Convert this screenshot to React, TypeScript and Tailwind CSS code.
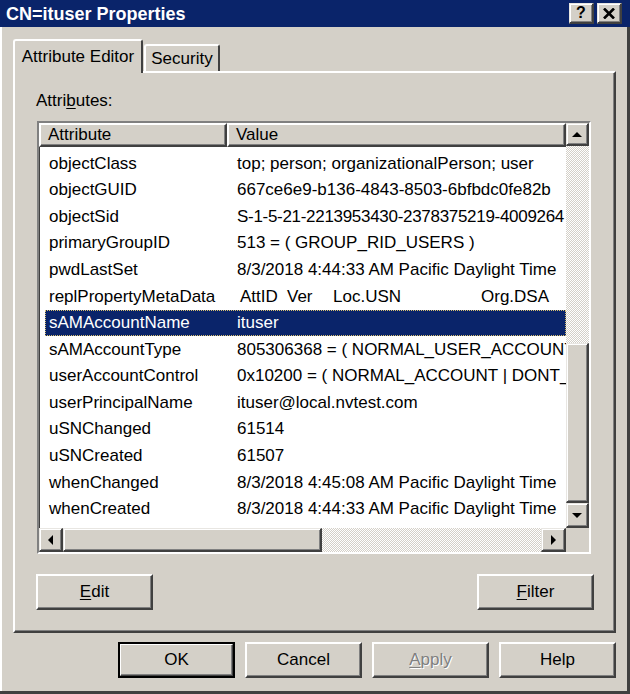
import React from 'react';

const raised =
  'bg-[#d4d0c8] border-t-2 border-l-2 border-t-white border-l-white border-r-2 border-b-2 border-r-[#404040] border-b-[#404040] shadow-[inset_-1px_-1px_0_#808080]';
const raisedThin =
  'bg-[#d4d0c8] border-t border-l border-t-[#e8e6e2] border-l-[#e8e6e2] border-r-2 border-b-2 border-r-[#404040] border-b-[#404040] shadow-[inset_1px_1px_0_#fff,inset_-1px_-1px_0_#808080]';
const dither =
  'bg-[image:repeating-conic-gradient(#d4d0c8_0%_25%,#ffffff_0%_50%)] bg-[length:2px_2px]';

const rows: { name: string; value: React.ReactNode; selected?: boolean }[] = [
  { name: 'objectClass', value: 'top; person; organizationalPerson; user' },
  { name: 'objectGUID', value: '667ce6e9-b136-4843-8503-6bfbdc0fe82b' },
  {
    name: 'objectSid',
    value: <span className="tracking-[-0.3px]">S-1-5-21-2213953430-2378375219-4009264</span>,
  },
  { name: 'primaryGroupID', value: '513 = ( GROUP_RID_USERS )' },
  { name: 'pwdLastSet', value: '8/3/2018 4:44:33 AM Pacific Daylight Time' },
  {
    name: 'replPropertyMetaData',
    value: (
      <span className="flex pl-[3px]">
        <span className="w-[47px]">AttID</span>
        <span className="w-[46px]">Ver</span>
        <span className="w-[148px]">Loc.USN</span>
        <span>Org.DSA</span>
      </span>
    ),
  },
  { name: 'sAMAccountName', value: 'ituser', selected: true },
  { name: 'sAMAccountType', value: '805306368 = ( NORMAL_USER_ACCOUNT )' },
  { name: 'userAccountControl', value: '0x10200 = ( NORMAL_ACCOUNT | DONT_EXPIRE_PASSWD )' },
  { name: 'userPrincipalName', value: 'ituser@local.nvtest.com' },
  { name: 'uSNChanged', value: '61514' },
  { name: 'uSNCreated', value: '61507' },
  { name: 'whenChanged', value: '8/3/2018 4:45:08 AM Pacific Daylight Time' },
  { name: 'whenCreated', value: '8/3/2018 4:44:33 AM Pacific Daylight Time' },
];

function Arrow({ dir }: { dir: 'up' | 'down' | 'left' | 'right' }) {
  const d = {
    up: 'M5 0 L10 5 L0 5 Z',
    down: 'M0 0 L10 0 L5 5 Z',
    left: 'M5 0 L5 10 L0 5 Z',
    right: 'M0 0 L5 5 L0 10 Z',
  }[dir];
  const vertical = dir === 'up' || dir === 'down';
  return (
    <svg width={vertical ? 10 : 5} height={vertical ? 5 : 10} viewBox={vertical ? '0 0 10 5' : '0 0 5 10'}>
      <path d={d} fill="#000" />
    </svg>
  );
}

function Button({ children, isDefault }: { children: React.ReactNode; isDefault?: boolean }) {
  if (isDefault) {
    return (
      <div className="w-[117px] h-[36px] border-2 border-black flex">
        <div className="flex-1 flex items-center justify-center bg-[#d4d0c8] border-t border-l border-white border-r border-b border-r-[#404040] border-b-[#404040] shadow-[inset_-1px_-1px_0_#808080]">
          {children}
        </div>
      </div>
    );
  }
  return <div className={`w-[117px] h-[36px] flex items-center justify-center ${raised}`}>{children}</div>;
}

export default function App() {
  return (
    <div className="w-[630px] h-[694px] bg-[#d4d0c8] flex flex-col overflow-hidden font-['Liberation_Sans',Arial,sans-serif] text-[17px] text-black shadow-[inset_-3px_-3px_0_#404040,inset_2px_0_0_#ffffff]">
      {/* Title bar */}
      <div className="h-[27px] bg-[#0a246a] flex items-center justify-between pl-[6px] pr-[8px] shrink-0">
        <span className="text-white font-bold text-[18px] leading-none">CN=ituser Properties</span>
        <div className="flex gap-[3px]">
          <div className={`w-[25px] h-[21px] flex items-center justify-center ${raisedThin}`}>
            <span className="font-bold text-[16px] leading-none">?</span>
          </div>
          <div className={`w-[25px] h-[21px] flex items-center justify-center ${raisedThin}`}>
            <svg width="12" height="11" viewBox="0 0 12 11">
              <path d="M1 0.5 L11 10.5 M11 0.5 L1 10.5" stroke="#000" strokeWidth="2.6" />
            </svg>
          </div>
        </div>
      </div>

      {/* Tabs */}
      <div className="ml-[13px] mt-[12px] flex items-end">
        <div className="relative z-10 -mb-[2px] w-[130px] h-[34px] bg-[#d4d0c8] border-t-2 border-l-2 border-white border-r-2 border-r-[#404040] rounded-t-[3px] flex items-center justify-center">
          Attribute Editor
        </div>
        <div className="ml-[1px] w-[76px] h-[27px] border-t-2 border-l-2 border-white border-r-2 border-r-[#404040] rounded-t-[3px] flex items-center justify-center">
          Security
        </div>
      </div>

      {/* Tab panel */}
      <div className="ml-[13px] w-[603px] h-[562px] shrink-0 flex flex-col border-t-2 border-l-2 border-white border-r-2 border-b-2 border-r-[#404040] border-b-[#404040] shadow-[inset_-1px_-1px_0_#808080]">
        <div className="pl-[21px] mt-[18px] leading-[20px]">
          Attri<span className="underline underline-offset-2">b</span>utes:
        </div>

        {/* List view */}
        <div className="ml-[22px] mt-[10px] w-[554px] h-[433px] flex bg-white border-t-2 border-l-2 border-[#808080] border-r-2 border-b-2 border-r-white border-b-white shadow-[inset_1px_1px_0_#404040]">
          <div className="w-[527px] flex flex-col">
            <div className="h-[405px] flex flex-col overflow-hidden">
              <div className="h-[24px] flex shrink-0">
                <div className={`w-[188px] flex items-center pl-[7px] ${raised}`}>Attribute</div>
                <div className={`flex-1 flex items-center pl-[7px] ${raised}`}>Value</div>
              </div>
              <div className="pt-[3px]">
                {rows.map(r => (
                  <div
                    key={r.name}
                    className={`ml-[6px] h-[26.6px] flex items-center ${
                      r.selected
                        ? 'bg-[#0a246a] text-white outline-1 outline-dotted outline-[#d8c070] -outline-offset-1'
                        : ''
                    }`}
                  >
                    <div className="w-[182px] pl-[4px] whitespace-nowrap">{r.name}</div>
                    <div className="flex-1 min-w-0 pl-[10px] whitespace-nowrap overflow-hidden">{r.value}</div>
                  </div>
                ))}
              </div>
            </div>
            {/* Horizontal scrollbar */}
            <div className="h-[24px] flex">
              <div className={`w-[24px] flex items-center justify-center ${raisedThin}`}>
                <Arrow dir="left" />
              </div>
              <div className={`w-[259px] ${raisedThin}`} />
              <div className={`w-[219px] ${dither}`} />
              <div className={`w-[25px] flex items-center justify-center ${raisedThin}`}>
                <Arrow dir="right" />
              </div>
            </div>
          </div>
          {/* Vertical scrollbar */}
          <div className="w-[23px] flex flex-col">
            <div className={`h-[23px] flex items-center justify-center ${raisedThin}`}>
              <Arrow dir="up" />
            </div>
            <div className={`h-[197px] ${dither}`} />
            <div className={`h-[160px] ${raisedThin}`} />
            <div className={`h-[25px] flex items-center justify-center ${raisedThin}`}>
              <Arrow dir="down" />
            </div>
            <div className="h-[24px] bg-[#d4d0c8]" />
          </div>
        </div>

        <div className="mt-[20px] pl-[21px] pr-[20px] flex justify-between">
          <Button>
            <span>
              <span className="underline underline-offset-2">E</span>dit
            </span>
          </Button>
          <Button>
            <span>
              <span className="underline underline-offset-2">F</span>ilter
            </span>
          </Button>
        </div>
      </div>

      {/* Dialog buttons */}
      <div className="mt-[9px] pr-[14px] flex justify-end gap-[10px]">
        <Button isDefault>OK</Button>
        <Button>Cancel</Button>
        <Button>
          <span className="text-[#808080] [text-shadow:1px_1px_0_#ffffff]">
            <span className="underline underline-offset-2">A</span>pply
          </span>
        </Button>
        <Button>Help</Button>
      </div>
    </div>
  );
}
